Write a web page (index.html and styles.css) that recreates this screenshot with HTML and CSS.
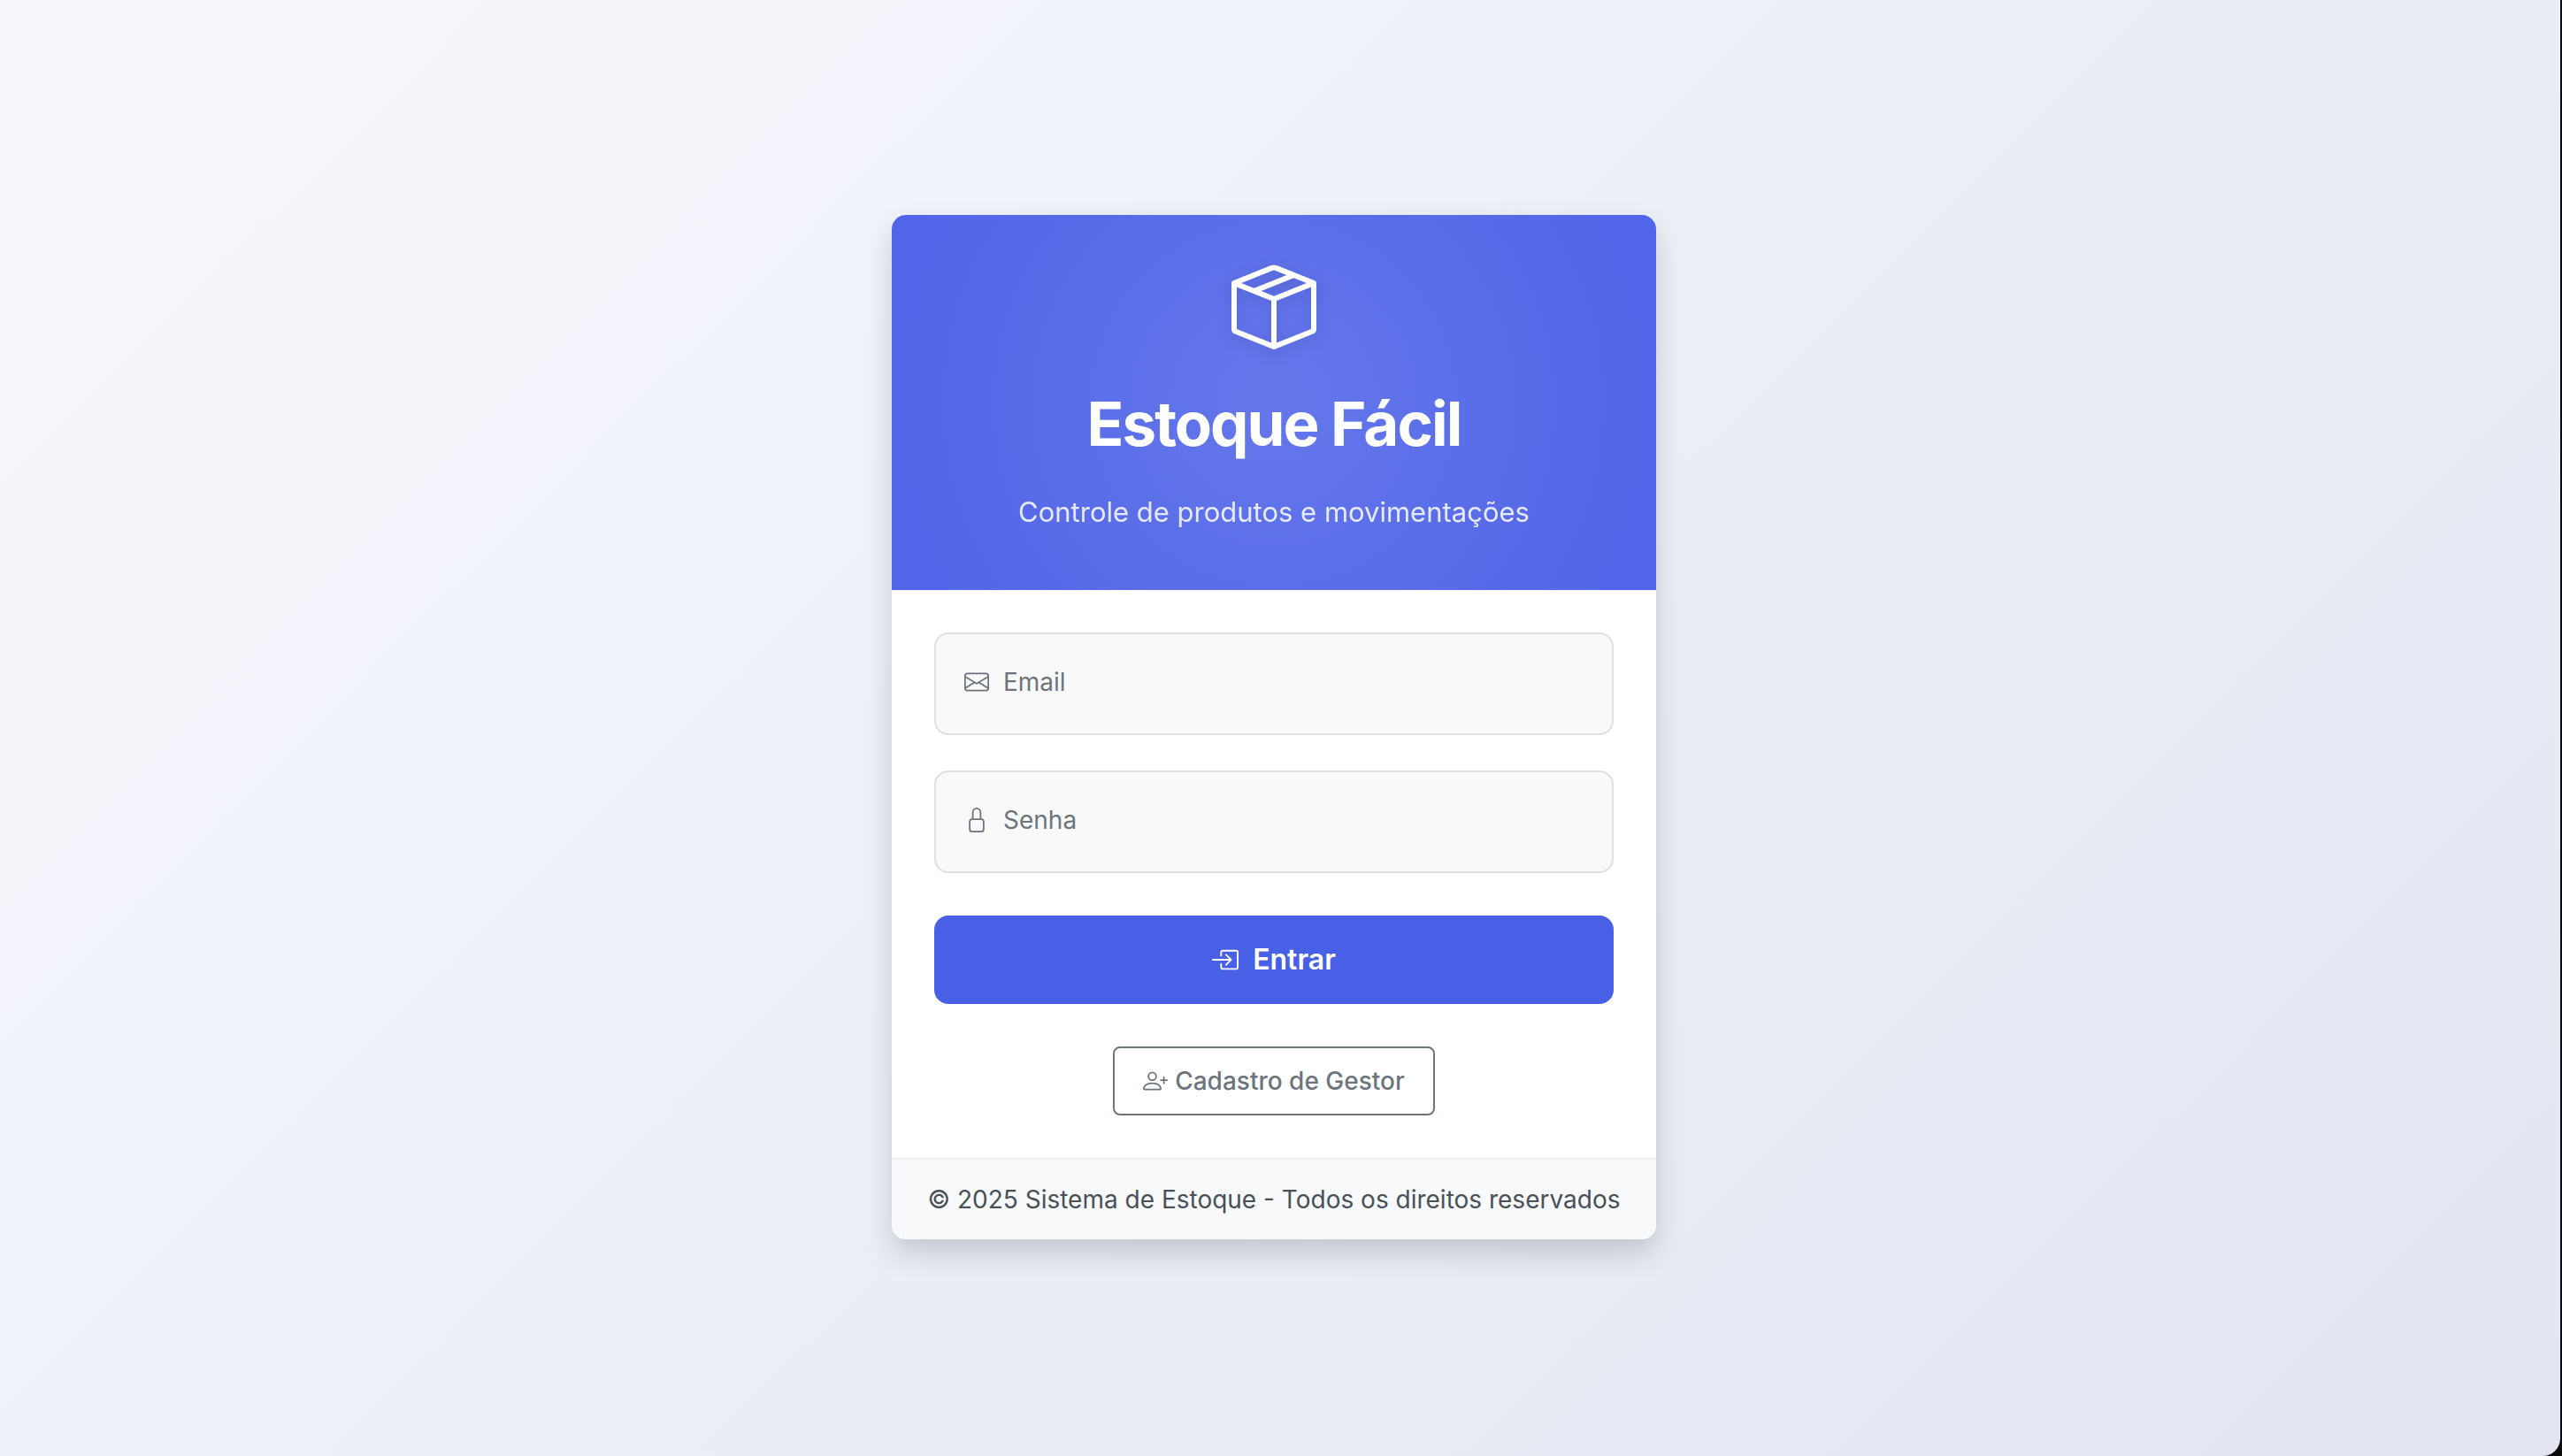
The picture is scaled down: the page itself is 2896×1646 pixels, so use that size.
FILE: index.html
```html
<!DOCTYPE html>
<html lang="pt-BR">
<head>
<meta charset="utf-8">
<meta name="viewport" content="width=device-width, initial-scale=1">
<title>Estoque Fácil</title>
<link rel="stylesheet" href="styles.css">
</head>
<body>
<main class="page">
  <section class="card">
    <header class="card-header">
      <svg class="logo" viewBox="0 0 16 16" fill="currentColor" aria-hidden="true"><path d="M8.186 1.113a.5.5 0 0 0-.372 0L1.846 3.5l2.404.961L10.404 2zm3.564 1.426L5.596 5 8 5.961 14.154 3.5zm3.25 1.7-6.5 2.6v7.922l6.5-2.6V4.24zM7.5 14.762V6.838L1 4.239v7.923zM7.443.184a1.5 1.5 0 0 1 1.114 0l7.129 2.852A.5.5 0 0 1 16 3.5v8.662a1 1 0 0 1-.629.928l-7.185 2.874a.5.5 0 0 1-.372 0L.63 13.09a1 1 0 0 1-.63-.928V3.5a.5.5 0 0 1 .314-.464z"/></svg>
      <h1 class="title">Estoque Fácil</h1>
      <p class="subtitle">Controle de produtos e movimentações</p>
    </header>
    <form class="card-body">
      <div class="field">
        <label class="field-label" for="email">
          <svg class="icon" viewBox="0 0 16 16" fill="currentColor" aria-hidden="true"><path d="M0 4a2 2 0 0 1 2-2h12a2 2 0 0 1 2 2v8a2 2 0 0 1-2 2H2a2 2 0 0 1-2-2zm2-1a1 1 0 0 0-1 1v.217l7 4.2 7-4.2V4a1 1 0 0 0-1-1zm13 2.383-4.708 2.825L15 11.105zm-.034 6.876-5.64-3.471L8 9.583l-1.326-.795-5.64 3.47A1 1 0 0 0 2 13h12a1 1 0 0 0 .966-.741M1 11.105l4.708-2.897L1 5.383z"/></svg>
          Email
        </label>
        <input class="field-input" id="email" type="email">
      </div>
      <div class="field">
        <label class="field-label" for="senha">
          <svg class="icon" viewBox="0 0 16 16" fill="currentColor" aria-hidden="true"><path d="M8 1a2 2 0 0 1 2 2v4H6V3a2 2 0 0 1 2-2m3 6V3a3 3 0 0 0-6 0v4a2 2 0 0 0-2 2v5a2 2 0 0 0 2 2h6a2 2 0 0 0 2-2V9a2 2 0 0 0-2-2M5 8h6a1 1 0 0 1 1 1v5a1 1 0 0 1-1 1H5a1 1 0 0 1-1-1V9a1 1 0 0 1 1-1"/></svg>
          Senha
        </label>
        <input class="field-input" id="senha" type="password">
      </div>
      <button class="btn btn-primary" type="submit">
        <svg class="icon" viewBox="0 0 16 16" fill="currentColor" aria-hidden="true"><path d="M6 3.5a.5.5 0 0 1 .5-.5h8a.5.5 0 0 1 .5.5v9a.5.5 0 0 1-.5.5h-8a.5.5 0 0 1-.5-.5v-2a.5.5 0 0 0-1 0v2A1.500 1.500 0 0 0 6.500 14h8a1.500 1.500 0 0 0 1.500-1.500v-9A1.500 1.500 0 0 0 14.500 2h-8A1.500 1.500 0 0 0 5 3.500v2a.5.5 0 0 0 1 0z"/><path d="M11.854 8.354a.5.5 0 0 0 0-.708l-3-3a.5.5 0 1 0-.708.708L10.293 7.500H.5a.5.5 0 0 0 0 1h9.793l-2.147 2.146a.5.5 0 0 0 .708.708z"/></svg>
        Entrar
      </button>
      <a class="btn btn-outline" href="#">
        <svg class="icon" viewBox="0 0 16 16" fill="currentColor" aria-hidden="true"><path d="M6 8a3 3 0 1 0 0-6 3 3 0 0 0 0 6m2-3a2 2 0 1 1-4 0 2 2 0 0 1 4 0m4 8c0 1-1 1-1 1H1s-1 0-1-1 1-4 6-4 6 3 6 4m-1-.004c-.001-.246-.154-.986-.832-1.664C9.516 10.680 8.289 10 6 10s-3.516.680-4.168 1.332c-.678.678-.830 1.418-.832 1.664z"/><path d="M13.500 5a.5.5 0 0 1 .5.5V7h1.500a.5.5 0 0 1 0 1H14v1.500a.5.5 0 0 1-1 0V8h-1.500a.5.5 0 0 1 0-1H13V5.500a.5.5 0 0 1 .5-.5"/></svg>
        Cadastro de Gestor
      </a>
    </form>
    <footer class="card-footer">© 2025 Sistema de Estoque - Todos os direitos reservados</footer>
  </section>
</main>
</body>
</html>
```
FILE: styles.css
```css
*, *::before, *::after { box-sizing: border-box; }

html { background: #0b0b0d; }

body {
  margin: 0;
  padding-right: 2px;
  font-family: Inter, "Noto Sans", sans-serif;
  font-size: 28px;
  line-height: 42px;
  color: #495057;
}

.page {
  display: flex;
  align-items: center;
  justify-content: center;
  min-height: 100vh;
  padding: 48px 14px 50px 0;
  border-bottom-right-radius: 20px;
  background: linear-gradient(135deg, #f6f8fc 0%, #e3e5f2 100%);
}

.card {
  width: 100%;
  max-width: 864px;
  overflow: hidden;
  border-radius: 16px;
  background: #fff;
  box-shadow: 0 16px 32px rgba(0, 0, 0, 0.16);
}

.card-header {
  display: flex;
  flex-direction: column;
  align-items: center;
  padding: 56px 48px 64px;
  color: #fff;
  background: radial-gradient(circle, #6477ea 0%, #4f64e8 100%);
}

.logo {
  width: 96px;
  height: 96px;
  filter: drop-shadow(0 4px 8px rgba(0, 0, 0, 0.1));
}

.title {
  margin: 36px 0 28px;
  font-size: 69px;
  font-weight: 700;
  line-height: 96px;
  letter-spacing: -2px;
}

.subtitle {
  margin: 0;
  font-size: 31px;
  line-height: 48px;
  opacity: 0.85;
}

.card-body {
  display: flex;
  flex-direction: column;
  align-items: center;
  padding: 48px;
}

.field {
  position: relative;
  width: 100%;
  margin-bottom: 40px;
}

/* The label floats over the input it names. */
.field-label {
  position: absolute;
  top: 0;
  left: 0;
  display: flex;
  align-items: center;
  gap: 16px;
  padding: 35px 34px;
  color: #6c757d;
  pointer-events: none;
}

.field-input {
  display: block;
  width: 100%;
  height: 116px;
  padding: 48px 34px 16px;
  border: 2px solid #dee0e0;
  border-radius: 16px;
  background: #f9f9f9;
  font: inherit;
}

.icon {
  flex: none;
  width: 28px;
  height: 28px;
}

.btn {
  display: flex;
  align-items: center;
  justify-content: center;
  font: inherit;
  font-weight: 600;
  text-decoration: none;
  cursor: pointer;
}

.btn-primary {
  gap: 16px;
  width: 100%;
  height: 100px;
  margin: 8px 0 48px;
  border: 0;
  border-radius: 16px;
  color: #fff;
  background: #4860e6;
  font-size: 32px;
}

.btn-primary .icon {
  width: 30px;
  height: 30px;
}

.btn-outline {
  gap: 8px;
  height: 78px;
  padding: 0 32px;
  border: 2px solid #6c757d;
  border-radius: 8px;
  color: #6c757d;
  font-weight: 500;
}

.card-footer {
  padding: 24px;
  border-top: 2px solid #eee;
  background: #f8f9fb;
  text-align: center;
}
```
